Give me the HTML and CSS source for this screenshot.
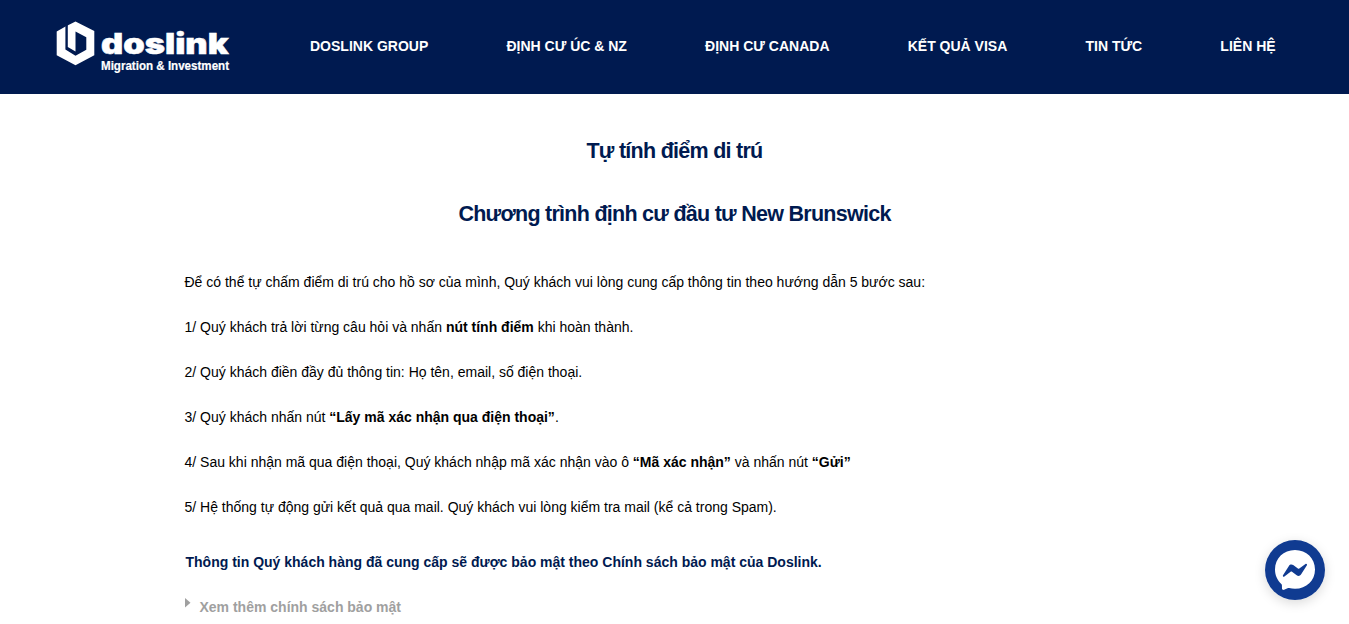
FILE: index.html
```html
<!DOCTYPE html>
<html lang="vi">
<head>
<meta charset="utf-8">
<title>Tự tính điểm di trú</title>
<link rel="stylesheet" href="styles.css">
</head>
<body>
<header class="header">
  <a class="logo">
    <svg width="180" height="60" viewBox="0 0 180 60">
      <path d="M20.500 1.500 39.300 11V35.200L20.500 45.200 1.700 35.200V11.500L10.500 6.500 13 5.300Z" fill="#fff"/>
      <path d="M10.400 5V29.500L20.500 35.800 31.300 29.700V17.200L20.500 11.500V31.500L12.800 27V5Z" fill="#001a50"/>
      <text class="brand" transform="translate(46 34) scale(1.16 1)" textLength="110" lengthAdjust="spacingAndGlyphs">doslink</text>
      <text class="tagline" x="46" y="49.500" textLength="128" lengthAdjust="spacingAndGlyphs">Migration &amp; Investment</text>
    </svg>
  </a>
  <nav class="nav">
    <a>DOSLINK GROUP</a><a>ĐỊNH CƯ ÚC &amp; NZ</a><a>ĐỊNH CƯ CANADA</a><a>KẾT QUẢ VISA</a><a>TIN TỨC</a><a>LIÊN HỆ</a>
  </nav>
</header>
<main class="content">
  <h1 class="title">Tự tính điểm di trú</h1>
  <h2 class="title">Chương trình định cư đầu tư New Brunswick</h2>
  <div class="steps">
    <p>Để có thể tự chấm điểm di trú cho hồ sơ của mình, Quý khách vui lòng cung cấp thông tin theo hướng dẫn 5 bước sau:</p>
    <p>1/ Quý khách trả lời từng câu hỏi và nhấn <b>nút tính điểm</b> khi hoàn thành.</p>
    <p>2/ Quý khách điền đầy đủ thông tin: Họ tên, email, số điện thoại.</p>
    <p>3/ Quý khách nhấn nút <b>“Lấy mã xác nhận qua điện thoại”</b>.</p>
    <p>4/ Sau khi nhận mã qua điện thoại, Quý khách nhập mã xác nhận vào ô <b>“Mã xác nhận”</b> và nhấn nút <b>“Gửi”</b></p>
    <p>5/ Hệ thống tự động gửi kết quả qua mail. Quý khách vui lòng kiểm tra mail (kể cả trong Spam).</p>
  </div>
  <p class="privacy">Thông tin Quý khách hàng đã cung cấp sẽ được bảo mật theo Chính sách bảo mật của Doslink.</p>
  <a class="more"><svg width="6" height="10" viewBox="0 0 6 10"><path d="M0 0 5.500 4.700 0 9.500Z" fill="#a0a0a0"/></svg><span>Xem thêm chính sách bảo mật</span></a>
</main>
<a class="chat">
  <svg width="60" height="60" viewBox="0 0 60 60">
    <circle cx="30" cy="30" r="30" fill="#103b91"/>
    <path d="M30 10C18.500 10 10 18.300 10 29.500c0 5.800 2.400 10.900 6.300 14.400.4.300.6.800.6 1.300l.1 3.300c0 1.100 1.100 1.800 2.100 1.300l4-1.700c.3-.1.700-.2 1-.1 1.900.5 3.800.8 5.900.8 11.500 0 20-8.200 20-19.300S41.500 10 30 10Z" fill="#fff"/>
    <path d="m18 35.200 5.900-9.300c.9-1.500 2.900-1.900 4.300-.8l4.700 3.500c.4.300 1 .3 1.400 0l6.200-4.700c.9-.7 2 .4 1.400 1.300L36 34.500c-.9 1.500-2.900 1.900-4.300.8L27 31.800c-.4-.3-1-.3-1.400 0l-6.200 4.700c-.9.700-2-.3-1.400-1.300Z" fill="#103b91"/>
  </svg>
</a>
</body>
</html>
```
FILE: styles.css
```css
body {
  margin: 0;
  height: 624px;
  overflow: hidden;
  background: #fff;
  color: #000;
  font-family: "Liberation Sans", Arial, sans-serif;
  font-size: 14px;
}
.header {
  display: flex;
  height: 94px;
  background: #001a50;
}
.logo {
  width: 255px;
  flex: none;
  padding: 20px 0 0 55px;
  box-sizing: border-box;
}
.logo svg {
  display: block;
  fill: #fff;
}
.brand {
  font: 900 28px Inter, sans-serif;
  stroke: #fff;
  stroke-width: .5px;
}
.tagline {
  font: 700 12px "Liberation Sans", sans-serif;
  stroke: #fff;
  stroke-width: .2px;
}
.nav {
  display: flex;
  gap: 78.2px;
  padding-left: 55px;
  color: #fff;
  font-weight: 700;
  line-height: 92px;
  white-space: nowrap;
}
.content {
  width: 980px;
  margin: 0 auto;
  padding-top: 26px;
}
.title {
  margin: 0;
  color: #001a50;
  font-size: 21.5px;
  line-height: 63px;
  letter-spacing: -.73px;
  text-align: center;
}
.steps {
  padding-top: 14px;
}
.steps p {
  margin: 0;
  line-height: 45px;
}
.privacy {
  margin: 10px 0 0 1px;
  color: #001a50;
  font-weight: 700;
  line-height: 45px;
}
.more {
  display: flex;
  align-items: center;
  gap: 9px;
  color: #a0a0a0;
  font-weight: 700;
  line-height: 45px;
}
.more svg { margin-bottom: 9px; }
.chat {
  position: fixed;
  left: 1265px;
  top: 540px;
  width: 60px;
  height: 60px;
  border-radius: 50%;
  box-shadow: 0 3px 12px rgba(0, 0, 0, .15);
}
```
